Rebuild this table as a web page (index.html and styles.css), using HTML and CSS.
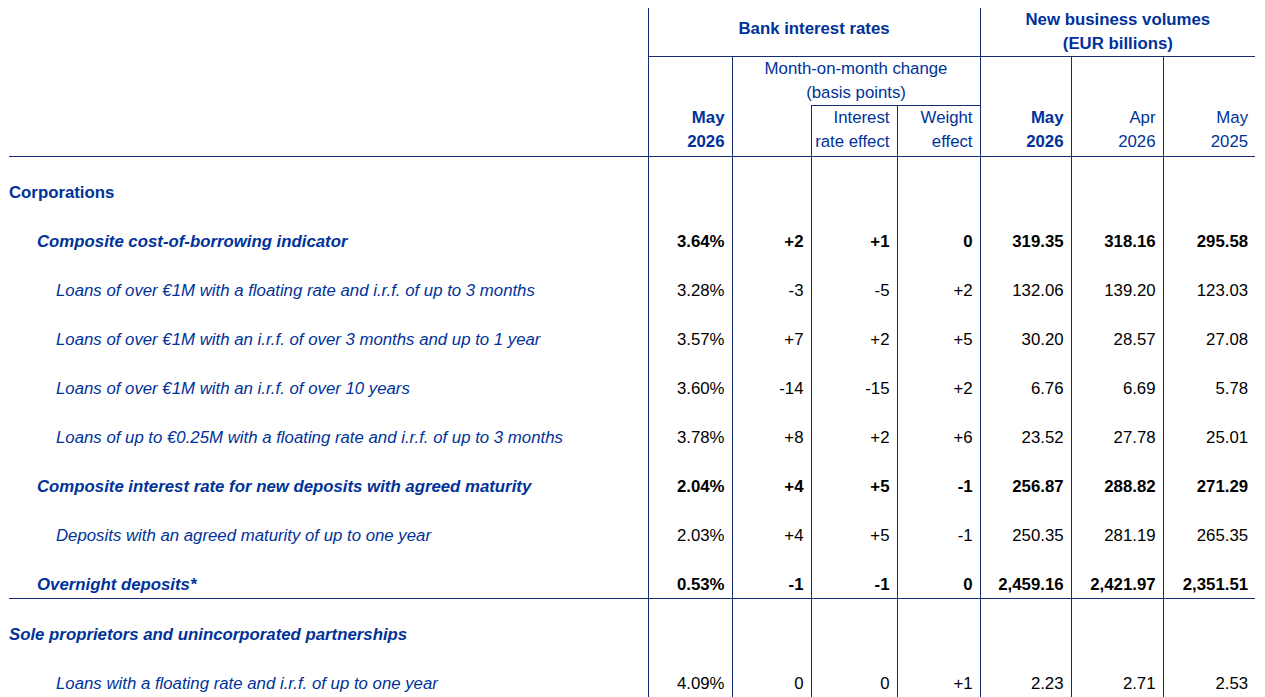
FILE: index.html
```html
<!DOCTYPE html>
<html lang="en">
<head>
<meta charset="utf-8">
<title>Bank interest rates</title>
<link rel="stylesheet" href="styles.css">
</head>
<body>
<table class="rates">
  <colgroup>
    <col class="c-label">
    <col class="c-rate">
    <col class="c-mom">
    <col class="c-ire">
    <col class="c-we">
    <col class="c-v1">
    <col class="c-v2">
    <col class="c-v3">
  </colgroup>
  <thead>
    <tr class="h1">
      <th class="h-blank" rowspan="3"></th>
      <th class="h-group h-mid" colspan="4">Bank interest rates</th>
      <th class="h-group" colspan="3">New business volumes<br>(EUR billions)</th>
    </tr>
    <tr class="h2">
      <th class="h-col h-bold" rowspan="2">May<br>2026</th>
      <th class="h-mom" colspan="3">Month-on-month change<br>(basis points)</th>
      <th class="h-col h-bold" rowspan="2">May<br>2026</th>
      <th class="h-col" rowspan="2">Apr<br>2026</th>
      <th class="h-col h-last" rowspan="2">May<br>2025</th>
    </tr>
    <tr class="h3">
      <th class="h-col h-empty"></th>
      <th class="h-col h-sub">Interest<br>rate effect</th>
      <th class="h-col h-sub">Weight<br>effect</th>
    </tr>
  </thead>
  <tbody>
    <tr class="sect">
      <td class="lab lv0">Corporations</td>
      <td></td><td></td><td></td><td></td><td></td><td></td><td class="last"></td>
    </tr>
    <tr class="strong">
      <td class="lab lv1">Composite cost-of-borrowing indicator</td>
      <td>3.64%</td><td>+2</td><td>+1</td><td>0</td><td>319.35</td><td>318.16</td><td class="last">295.58</td>
    </tr>
    <tr>
      <td class="lab lv2">Loans of over €1M with a floating rate and i.r.f. of up to 3 months</td>
      <td>3.28%</td><td>-3</td><td>-5</td><td>+2</td><td>132.06</td><td>139.20</td><td class="last">123.03</td>
    </tr>
    <tr>
      <td class="lab lv2">Loans of over €1M with an i.r.f. of over 3 months and up to 1 year</td>
      <td>3.57%</td><td>+7</td><td>+2</td><td>+5</td><td>30.20</td><td>28.57</td><td class="last">27.08</td>
    </tr>
    <tr>
      <td class="lab lv2">Loans of over €1M with an i.r.f. of over 10 years</td>
      <td>3.60%</td><td>-14</td><td>-15</td><td>+2</td><td>6.76</td><td>6.69</td><td class="last">5.78</td>
    </tr>
    <tr>
      <td class="lab lv2">Loans of up to €0.25M with a floating rate and i.r.f. of up to 3 months</td>
      <td>3.78%</td><td>+8</td><td>+2</td><td>+6</td><td>23.52</td><td>27.78</td><td class="last">25.01</td>
    </tr>
    <tr class="strong">
      <td class="lab lv1">Composite interest rate for new deposits with agreed maturity</td>
      <td>2.04%</td><td>+4</td><td>+5</td><td>-1</td><td>256.87</td><td>288.82</td><td class="last">271.29</td>
    </tr>
    <tr>
      <td class="lab lv2">Deposits with an agreed maturity of up to one year</td>
      <td>2.03%</td><td>+4</td><td>+5</td><td>-1</td><td>250.35</td><td>281.19</td><td class="last">265.35</td>
    </tr>
    <tr class="strong">
      <td class="lab lv1">Overnight deposits*</td>
      <td>0.53%</td><td>-1</td><td>-1</td><td>0</td><td>2,459.16</td><td>2,421.97</td><td class="last">2,351.51</td>
    </tr>
    <tr class="sect split">
      <td class="lab lv0 it">Sole proprietors and unincorporated partnerships</td>
      <td></td><td></td><td></td><td></td><td></td><td></td><td class="last"></td>
    </tr>
    <tr>
      <td class="lab lv2">Loans with a floating rate and i.r.f. of up to one year</td>
      <td>4.09%</td><td>0</td><td>0</td><td>+1</td><td>2.23</td><td>2.71</td><td class="last">2.53</td>
    </tr>
  </tbody>
</table>
</body>
</html>
```

FILE: styles.css
```css
html, body {
  background: #ffffff;
}
body {
  margin: 8px 0 0 9px;
  font-family: "Liberation Sans", Arial, sans-serif;
  font-size: 16.8px;
  color: #003299;
}
.rates {
  border-collapse: collapse;
  table-layout: fixed;
  width: 1246px;
}
.c-label { width: 639px; }
.c-rate { width: 84px; }
.c-mom { width: 79px; }
.c-ire { width: 86px; }
.c-we { width: 83px; }
.c-v1 { width: 91px; }
.c-v2 { width: 92px; }
.c-v3 { width: 92px; }

th, td {
  padding: 0;
  line-height: 24px;
}
th {
  font-weight: normal;
  color: #003299;
}
.h-blank {
  border-right: 1px solid #142b6f;
  border-bottom: 1px solid #142b6f;
}
.h1 th.h-group {
  height: 48px;
  font-weight: bold;
  text-align: center;
  vertical-align: bottom;
  padding-bottom: 0;
  border-bottom: 1px solid #142b6f;
  border-right: 1px solid #142b6f;
}
.h1 th.h-group:last-child {
  border-right: none;
}
.h1 th.h-mid {
  vertical-align: top;
  padding-top: 9px;
  height: 39px;
}
.h2 th, .h3 th {
  vertical-align: bottom;
}
.h-mom {
  text-align: center;
  vertical-align: top !important;
  height: 48px;
  padding-top: 0;
  border-right: 1px solid #142b6f;
}
.h-col {
  text-align: right;
  padding: 0 7px 2px 0;
  border-right: 1px solid #142b6f;
  border-bottom: 1px solid #142b6f;
}
.h3 th {
  height: 48px;
}
.h-sub {
  border-top: 1px solid #142b6f;
}
.h-bold {
  font-weight: bold;
}
.h-last {
  border-right: none;
}

td {
  height: 46px;
  vertical-align: bottom;
  text-align: right;
  padding: 0 7px 3px 0;
  line-height: 20px;
  color: #000000;
  border-right: 1px solid #142b6f;
  white-space: nowrap;
}
td.last {
  border-right: none;
}
td.lab {
  text-align: left;
  color: #003299;
  font-style: italic;
  border-right: 1px solid #142b6f;
}
td.lv0 {
  padding-left: 0;
  font-weight: bold;
  font-style: normal;
}
td.lv0.it {
  font-style: italic;
}
td.lv1 {
  padding-left: 28px;
  font-weight: bold;
}
td.lv2 {
  padding-left: 47px;
}
tr.strong td {
  font-weight: bold;
}
tr.split td {
  border-top: 1px solid #142b6f;
}
```
